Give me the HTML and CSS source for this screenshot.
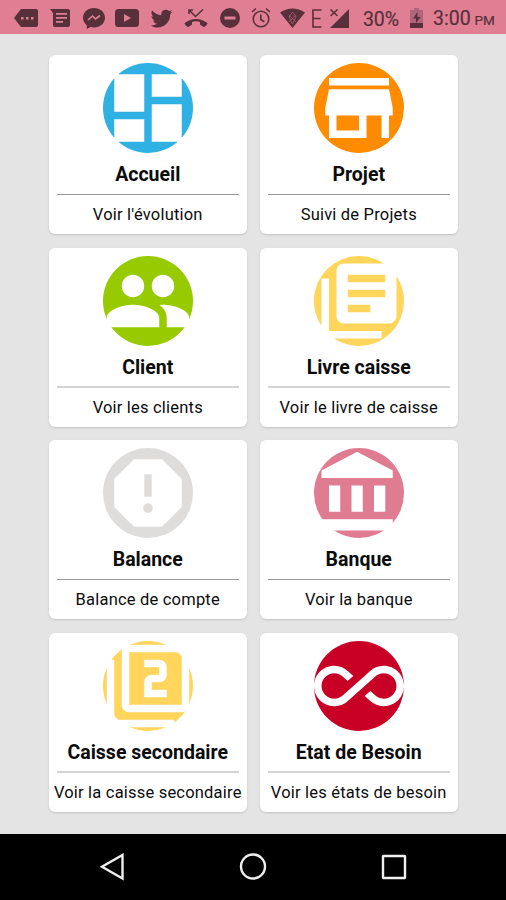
FILE: index.html
```html
<!DOCTYPE html>
<html lang="fr">
<head>
  <meta charset="UTF-8">
  <title>Accueil</title>
  <link rel="stylesheet" href="styles.css">
</head>
<body>
  <header class="status">
    <svg width="24" height="20" viewBox="0 0 24 20"><path d="M7 1h15q2 0 2 2v14q0 2-2 2H7L0 10z"/><path class="cut" d="M7 9h2.500v2.500H7zM12 9h2.500v2.500H12zM17 9h2.500v2.500H17z"/></svg>
    <svg width="20" height="18" viewBox="0 0 20 18"><path d="M0 0h18q2 0 2 2v14q0 2-2 2H5q-2 0-2-2V4z"/><path class="cut" d="M6 4h11v1.700H6zM6 8h11v1.700H6zM6 12h7v1.700H6z"/></svg>
    <svg width="22" height="22" viewBox="0 0 22 22"><path d="M11 1C4.800 1 0 5.200 0 10.800c0 3.100 1.500 5.600 3.800 7.400V22l3.600-2c1.100.3 2.300.5 3.600.5 6.200 0 11-4.200 11-9.700S17.200 1 11 1z"/><path class="line-cut" d="M5 13l4.500-4 3 3L17 8.500"/></svg>
    <svg width="24" height="18" viewBox="0 0 24 18"><rect width="24" height="18" rx="3.500"/><path class="cut" d="M9 5l7 4-7 4z"/></svg>
    <svg width="23" height="22" viewBox="1 2 22 20"><path d="M22.460 6c-.77.350-1.600.58-2.460.69.88-.53 1.560-1.370 1.880-2.380-.83.500-1.750.85-2.720 1.050C18.370 4.500 17.260 4 16 4c-2.350 0-4.270 1.920-4.270 4.290 0 .34.040.67.110.98C8.280 9.090 5.110 7.380 3 4.790c-.37.630-.58 1.370-.58 2.150 0 1.490.75 2.810 1.910 3.560-.71 0-1.370-.2-1.950-.5v.03c0 2.080 1.480 3.820 3.440 4.210a4.220 4.220 0 0 1-1.930.07 4.280 4.280 0 0 0 4 2.980 8.521 8.521 0 0 1-5.330 1.840c-.34 0-.68-.02-1.020-.06C3.440 20.290 5.700 21 8.120 21 16 21 20.330 14.460 20.330 8.790c0-.19 0-.37-.01-.56.84-.6 1.560-1.360 2.140-2.230z"/></svg>
    <svg width="24" height="20" viewBox="0 0 24 20"><path d="M12 11C8 11 4 12.300 1 14.800q-1 .9 0 1.800l2.300 2.200q.8.500 1.500 0L8 16.500V14q4-1.300 8 0v2.500l3.200 2.300q.7.500 1.500 0l2.300-2.200q1-.9 0-1.800C20 12.300 16 11 12 11z"/><path class="line" d="M5 6V2h4M5 2l6.500 6.500L19 1.500"/></svg>
    <svg width="20" height="20" viewBox="0 0 20 20"><circle cx="10" cy="10" r="10"/><path class="cut" d="M4.500 8.500h11v3h-11z"/></svg>
    <svg width="20" height="22" viewBox="0 0 20 22"><circle class="line" cx="10" cy="12" r="7.800"/><path class="line" d="M9.800 7.500V12.500l3.500 2.200M1 5l4-3.500M19 5l-4-3.500"/></svg>
    <svg width="25" height="20" viewBox="0 0 25 20"><path d="M0 4.500Q12.500-3.500 25 4.500L12.500 20z"/><path class="line-thin" d="M9 7l7 7M16 7l-7 7M12.500 4l3.500 5-3.500 7L9 9z"/></svg>
    <svg width="10" height="19" viewBox="0 0 10 19"><path class="line" d="M9.500 1H1v17h8.500M1 9.500h7.500"/></svg>
    <svg width="21" height="20" viewBox="0 0 21 20"><path d="M20 1v19H1z"/><path class="halo" d="M1 1l9 8M10 1L1 9"/><path class="line" d="M1.500 1.500l7 6.500M8.500 1.500l-7 6.500"/></svg>
    <span class="percent">30%</span>
    <svg width="13" height="20" viewBox="0 0 13 20"><path class="faded" d="M4 0h5v2h4v13H0V2h4z"/><path d="M0 15h13v5H0zM7.500 4L3 10.500h3V15l4.500-6h-3z"/></svg>
    <span class="time">3:00 <small>PM</small></span>
  </header>

  <main class="menu">
    <div class="card">
      <svg class="icon blue" viewBox="0 0 24 24"><circle cx="12" cy="12" r="12"/><path d="M3 13h8V3H3v10zm0 8h8v-6H3v6zm10 0h8V11h-8v10zm0-18v6h8V3h-8z"/></svg>
      <h2>Accueil</h2>
      <p>Voir l'évolution</p>
    </div>
    <div class="card">
      <svg class="icon orange" viewBox="0 0 24 24"><circle cx="12" cy="12" r="12"/><path d="M20 4H4v2h16V4zm1 10v-2l-1-5H4l-1 5v2h1v6h10v-6h4v6h2v-6h1zm-9 4H6v-4h6v4z"/></svg>
      <h2>Projet</h2>
      <p>Suivi de Projets</p>
    </div>
    <div class="card light">
      <svg class="icon green" viewBox="0 0 24 24"><circle cx="12" cy="12" r="12"/><path d="M16 11c1.660 0 2.990-1.340 2.990-3S17.660 5 16 5c-1.660 0-3 1.340-3 3s1.340 3 3 3zm-8 0c1.660 0 2.990-1.340 2.990-3S9.660 5 8 5C6.340 5 5 6.340 5 8s1.340 3 3 3zm0 2c-2.330 0-7 1.170-7 3.500V19h14v-2.500c0-2.330-4.670-3.500-7-3.500zm8 0c-.29 0-.62.020-.97.050 1.160.84 1.970 1.970 1.970 3.450V19h6v-2.500c0-2.330-4.670-3.500-7-3.500z"/></svg>
      <h2>Client</h2>
      <p>Voir les clients</p>
    </div>
    <div class="card light">
      <svg class="icon yellow" viewBox="0 0 24 24"><circle cx="12" cy="12" r="12"/><path d="M4 6H2v14c0 1.100.9 2 2 2h14v-2H4V6zm16-4H8c-1.100 0-2 .9-2 2v12c0 1.100.9 2 2 2h12c1.100 0 2-.9 2-2V4c0-1.100-.9-2-2-2zm-1 9H9V9h10v2zm-4 4H9v-2h6v2zm4-8H9V5h10v2z"/></svg>
      <h2>Livre caisse</h2>
      <p>Voir le livre de caisse</p>
    </div>
    <div class="card">
      <svg class="icon grey" viewBox="0 0 24 24"><circle cx="12" cy="12" r="12"/><path d="M15.730 3H8.270L3 8.270v7.460L8.270 21h7.460L21 15.730V8.270L15.730 3zM12 17.300c-.72 0-1.300-.58-1.300-1.300 0-.72.58-1.300 1.300-1.300.72 0 1.300.58 1.300 1.300 0 .72-.58 1.300-1.300 1.300zm1-4.300h-2V7h2v6z"/></svg>
      <h2>Balance</h2>
      <p>Balance de compte</p>
    </div>
    <div class="card">
      <svg class="icon pink" viewBox="0 0 24 24"><circle cx="12" cy="12" r="12"/><path d="M4 10v7h3v-7H4zm6 0v7h3v-7h-3zM0 22h21v-3H0v3zm16-12v7h3v-7h-3zm-4.500-9L2 6v2h19V6l-9.500-5z"/></svg>
      <h2>Banque</h2>
      <p>Voir la banque</p>
    </div>
    <div class="card light">
      <svg class="icon yellow" viewBox="0 0 24 24"><circle cx="12" cy="12" r="12"/><path d="M3 5H1v16c0 1.100.9 2 2 2h16v-2H3V5zm18-4H7c-1.100 0-2 .9-2 2v14c0 1.100.9 2 2 2h14c1.100 0 2-.9 2-2V3c0-1.100-.9-2-2-2zm0 16H7V3h14v14zm-4-4h-4v-2h2c1.100 0 2-.89 2-2V7c0-1.110-.9-2-2-2h-4v2h4v2h-2c-1.100 0-2 .89-2 2v4h6v-2z"/></svg>
      <h2>Caisse secondaire</h2>
      <p>Voir la caisse secondaire</p>
    </div>
    <div class="card light">
      <svg class="icon red" viewBox="0 0 24 24"><circle cx="12" cy="12" r="12"/><path d="M18.600 6.620c-1.440 0-2.800.56-3.770 1.530L12 10.660 10.480 12h.01L7.800 14.390c-.64.64-1.490.99-2.400.99-1.870 0-3.390-1.510-3.390-3.380S3.530 8.620 5.400 8.620c.91 0 1.760.35 2.440 1.030l1.130 1 1.510-1.340L9.220 8.200C8.200 7.180 6.840 6.620 5.400 6.620 2.420 6.620 0 9.040 0 12s2.420 5.380 5.400 5.380c1.440 0 2.800-.56 3.770-1.530l2.830-2.500.01.01L13.520 12h-.01l2.690-2.390c.64-.64 1.490-.99 2.400-.99 1.870 0 3.390 1.510 3.390 3.380s-1.520 3.380-3.390 3.380c-.9 0-1.760-.35-2.440-1.030l-1.140-1.010-1.510 1.340 1.270 1.120c1.020 1.010 2.370 1.570 3.820 1.570 2.980 0 5.400-2.410 5.400-5.380s-2.420-5.370-5.400-5.370z"/></svg>
      <h2>Etat de Besoin</h2>
      <p>Voir les états de besoin</p>
    </div>
  </main>

  <nav class="navbar">
    <svg width="28" height="28" viewBox="0 0 28 28"><path d="M23.500 2v23.500L3 13.800z"/></svg>
    <svg width="28" height="28" viewBox="0 0 28 28"><circle cx="14" cy="13.500" r="12"/></svg>
    <svg width="28" height="28" viewBox="0 0 28 28"><rect x="3" y="3" width="22" height="22" rx=".5"/></svg>
  </nav>
</body>
</html>
```
FILE: styles.css
```css
* {
  box-sizing: border-box;
}
body {
  margin: 0;
  height: 900px;
  display: flex;
  flex-direction: column;
  background: #e4e4e4;
  font-family: Roboto, sans-serif;
  color: #0c0c0c;
}
.status {
  height: 34px;
  flex: none;
  display: grid;
  grid-template-columns: 34px 34px 33px 34px 34px 35px 33px 30px 33px 16px 28px 56px 15px 80px;
  align-items: center;
  justify-items: center;
  background: #e07f93;
  padding-left: 9px;
  color: #58303a;
  fill: #58303a;
}
.status .cut {
  fill: #e07f93;
}
.status .line,
.status .line-cut,
.status .line-thin,
.status .halo {
  fill: none;
  stroke: #58303a;
  stroke-width: 1.6;
}
.status .line-cut {
  stroke: #e07f93;
}
.status .line-thin {
  stroke: #a85f6e;
  stroke-width: 0.8;
}
.status .halo {
  stroke: #e07f93;
  stroke-width: 4;
}
.status .faded {
  fill: #b0667a;
}
.percent,
.time {
  font-size: 19.500px;
  line-height: 32px;
  padding-top: 3px;
  white-space: nowrap;
  -webkit-text-stroke: 0.2px #58303a;
}
.time {
  justify-self: start;
  padding-left: 9px;
}
.time small {
  font-size: 13.500px;
  margin-left: -1px;
}
.menu {
  flex: none;
  height: 799.500px;
  padding: 21px 48px 0 49px;
  display: grid;
  grid-template-columns: 197.500px 197.500px;
  grid-auto-rows: 179px;
  align-content: start;
  gap: 13.700px 13.500px;
}
.card {
  background: white;
  border-radius: 6px;
  padding: 8px 8px 0;
  text-align: center;
  box-shadow: 0 1px 2px rgba(0, 0, 0, 0.15);
}
.icon {
  display: block;
  width: 90px;
  height: 90px;
  margin: 0 auto;
}
.icon path {
  fill: white;
}
.blue { fill: #2fb1e3; }
.orange { fill: #ff8b00; }
.green { fill: #97cb00; }
.yellow { fill: #ffd55c; }
.grey { fill: #dfdcdc; }
.pink { fill: #e07c92; }
.red { fill: #c90025; }
.card h2 {
  margin: 0;
  height: 42px;
  border-bottom: 1px solid #989898;
  font-size: 19.500px;
  line-height: 43px;
  font-weight: 700;
}
.card.light h2 {
  border-bottom: 2px solid #d4d4d4;
}
.card p {
  margin: 0 -8px;
  font-size: 16.500px;
  line-height: 40px;
  letter-spacing: 0.2px;
  white-space: nowrap;
}
.navbar {
  flex: 1;
  display: flex;
  justify-content: center;
  align-items: center;
  gap: 112.500px;
  background: black;
}
.navbar svg {
  fill: none;
  stroke: #f0f0f0;
  stroke-width: 2.4;
}
```
